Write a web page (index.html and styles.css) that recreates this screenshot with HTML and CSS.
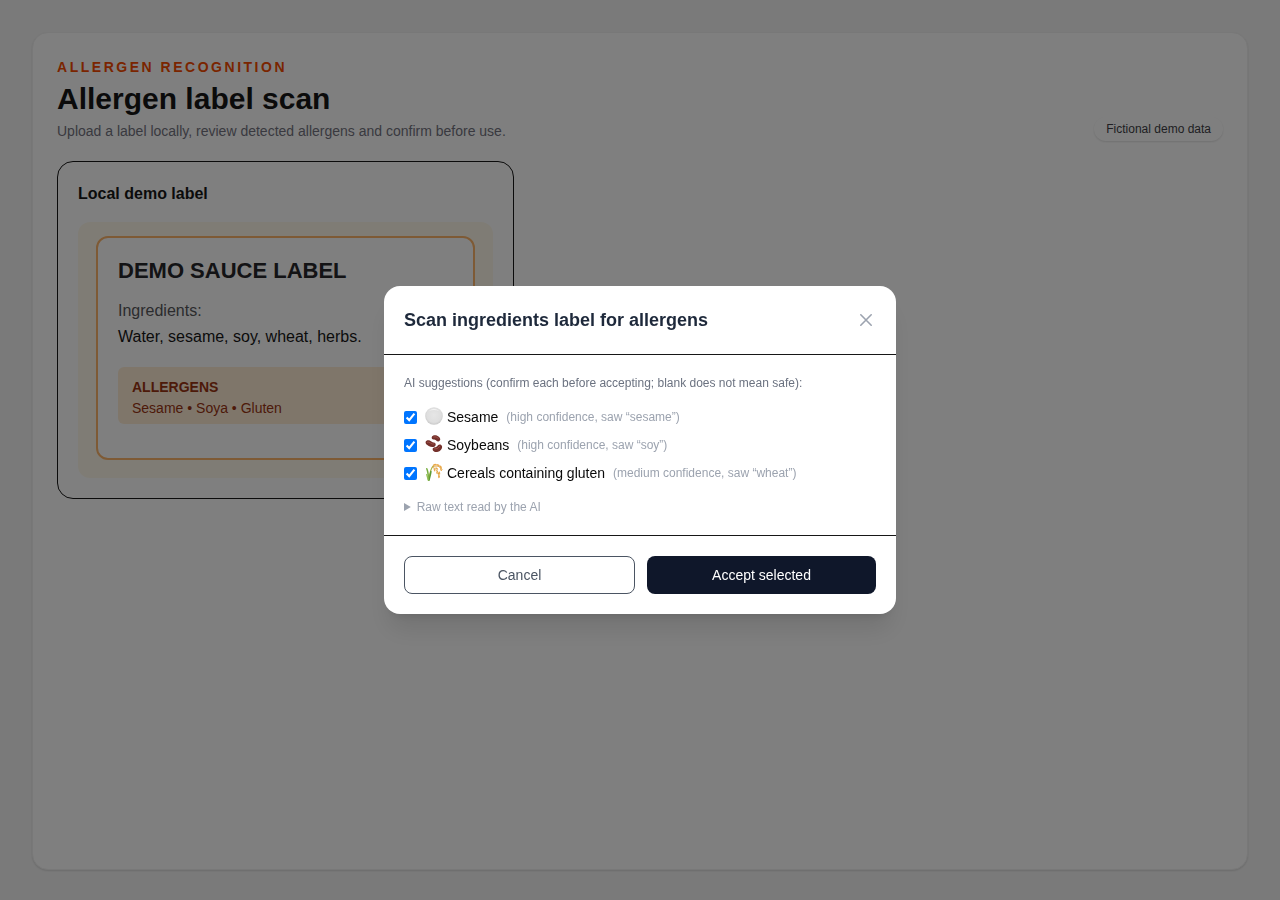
FILE: index.html
```html
<!DOCTYPE html>
<html lang="en">
<head>
<meta charset="UTF-8">
<meta name="viewport" content="width=device-width, initial-scale=1.0">
<title>Allergen label scan</title>
<link rel="stylesheet" href="styles.css">
</head>
<body>

<main class="page">
    <section class="panel">
        <header class="panel-header">
            <div>
                <p class="eyebrow">Allergen recognition</p>
                <h1>Allergen label scan</h1>
                <p class="intro">Upload a label locally, review detected allergens and confirm before use.</p>
            </div>
            <span class="badge">Fictional demo data</span>
        </header>

        <article class="card">
            <h2>Local demo label</h2>
            <div class="label-frame">
                <div class="label">
                    <h3>DEMO SAUCE LABEL</h3>
                    <p class="label-caption">Ingredients:</p>
                    <p class="label-text">Water, sesame, soy, wheat, herbs.</p>
                    <div class="label-allergens">
                        <strong>ALLERGENS</strong>
                        <p>Sesame • Soya • Gluten</p>
                    </div>
                </div>
            </div>
        </article>
    </section>
</main>

<!-- Scan dialog -->
<div class="overlay">
    <div class="modal" role="dialog" aria-modal="true" aria-labelledby="modal-title">
        <div class="modal-header">
            <h2 id="modal-title">Scan ingredients label for allergens</h2>
            <button type="button" class="close" aria-label="Close">
                <svg width="20" height="20" viewBox="0 0 20 20" fill="none" stroke="currentColor" stroke-width="1.6" stroke-linecap="round"><path d="M4.8 4.8l10.4 10.4M15.2 4.8l-10.4 10.4"/></svg>
            </button>
        </div>

        <div class="modal-body">
            <p class="note">AI suggestions (confirm each before accepting; blank does not mean safe):</p>
            <ul class="suggestions">
                <li>
                    <input type="checkbox" id="sesame" checked>
                    <label for="sesame">
                        <svg class="icon" viewBox="0 0 18 18" aria-hidden="true">
                            <defs>
                                <radialGradient id="pearl" cx="50%" cy="45%" r="55%">
                                    <stop offset="0" stop-color="#e6e6e6"/>
                                    <stop offset=".75" stop-color="#dedede"/>
                                    <stop offset="1" stop-color="#c8c8c8"/>
                                </radialGradient>
                            </defs>
                            <circle cx="9" cy="9" r="8.8" fill="url(#pearl)"/>
                            <path d="M3.5 4.2Q9-.8 14.5 4.2Q9 2 3.5 4.2z" fill="#f3f3f3"/>
                        </svg>
                        Sesame
                    </label>
                    <span class="hint">(high confidence, saw “sesame”)</span>
                </li>
                <li>
                    <input type="checkbox" id="soy" checked>
                    <label for="soy">
                        <svg class="icon" viewBox="0 0 18 18" aria-hidden="true">
                            <g fill="#74302b">
                                <path d="M6.8 2.1C7.3.2 10.1-.2 12.2.7C14.6 1.7 16 4 14.8 5.6C13.7 7 12 6.4 11.2 5.4C10.4 4.5 9.6 4.6 8.4 4.4C7.2 4.2 6.5 3.3 6.8 2.1z"/>
                                <path d="M.6 7.1C1 5.3 3.4 4.9 5.1 5.8C6.4 6.5 7.1 7.4 8.6 7.5C10.3 7.6 11.2 9 10.5 10.4C9.5 12.4 6.2 12.3 3.7 11C1.7 10 .2 8.6.6 7.1z"/>
                                <path d="M7.6 14.2C7.5 12.5 9.3 12.3 10.5 12.2C11.9 12.1 12.2 11.1 13.2 10.1C14.4 8.9 16.5 9.4 17 11.2C17.6 13.5 15.6 16 13 16.8C10.3 17.6 7.7 16.3 7.6 14.2z"/>
                            </g>
                            <g fill="none" stroke="#9c5048" stroke-width="1" stroke-linecap="round">
                                <path d="M8.7 1.9Q11.2 1 13.3 3.2"/>
                                <path d="M2.3 7.2Q4 6.5 5.5 8T9 9"/>
                                <path d="M9.6 14Q13 14.5 14.8 11.2"/>
                            </g>
                        </svg>
                        Soybeans
                    </label>
                    <span class="hint">(high confidence, saw “soy”)</span>
                </li>
                <li>
                    <input type="checkbox" id="gluten" checked>
                    <label for="gluten">
                        <svg class="icon" viewBox="0 0 18 18" aria-hidden="true">
                            <g fill="none" stroke-linecap="round">
                                <path d="M3.6 17.2C3.4 12 3 8.5 1.8 5.8" stroke="#76ad3e" stroke-width="1.5"/>
                                <path d="M3.8 17C4.6 10.5 5.4 5.3 8.5 2.8" stroke="#a9b84b" stroke-width="1.2"/>
                                <path d="M4 17C5.2 12.8 5.8 10.5 5.9 8.5" stroke="#5c9b36" stroke-width="1.5"/>
                                <path d="M1.7 11.5L3.2 17" stroke="#91bf56" stroke-width="1.2"/>
                                <path d="M7.5 4C10.5 1.8 14.5 3 17 6.2" stroke="#d99b35" stroke-width="1"/>
                                <path d="M8.5 4.8C11.7 5.8 13.8 9.5 14.3 14" stroke="#d99b35" stroke-width="1"/>
                            </g>
                            <g fill="#eba94a">
                                <ellipse cx="9.5" cy="1.8" rx="1.8" ry=".8" transform="rotate(-22 9.5 1.8)"/>
                                <ellipse cx="12.7" cy="1.9" rx="1.7" ry=".8" transform="rotate(18 12.7 1.9)"/>
                                <ellipse cx="15.5" cy="3.6" rx="1.7" ry=".8" transform="rotate(40 15.5 3.6)"/>
                                <ellipse cx="16" cy="6.6" rx="1.6" ry=".7" transform="rotate(65 16 6.6)"/>
                                <ellipse cx="11.8" cy="5.5" rx="1.7" ry=".8" transform="rotate(40 11.8 5.5)"/>
                                <ellipse cx="9.5" cy="7" rx="1.5" ry=".7" transform="rotate(70 9.5 7)"/>
                                <ellipse cx="12" cy="9.8" rx="1.6" ry=".7" transform="rotate(75 12 9.8)"/>
                                <ellipse cx="14.5" cy="10.2" rx="1.6" ry=".7" transform="rotate(82 14.5 10.2)"/>
                                <ellipse cx="13.8" cy="13.6" rx="1.6" ry=".7" transform="rotate(85 13.8 13.6)"/>
                            </g>
                        </svg>
                        Cereals containing gluten
                    </label>
                    <span class="hint">(medium confidence, saw “wheat”)</span>
                </li>
            </ul>
            <details>
                <summary>Raw text read by the AI</summary>
                <p>Water, sesame, soy, wheat, herbs.</p>
            </details>
        </div>

        <div class="modal-footer">
            <button type="button" class="btn btn-outline">Cancel</button>
            <button type="button" class="btn btn-primary">Accept selected</button>
        </div>
    </div>
</div>

</body>
</html>
```
FILE: styles.css
```css
* {
    box-sizing: border-box;
}

body, h1, h2, h3, p, ul {
    margin: 0;
    padding: 0;
}

body {
    font-family: "Liberation Sans", Arial, sans-serif;
    font-size: 14px;
    line-height: 20px;
    color: #171717;
    background: #f5f5f5;
}

button {
    font: inherit;
    cursor: pointer;
}

.page {
    display: flex;
    min-height: 100vh;
    padding: 32px 32px 30px;
}

.panel {
    flex: 1;
    padding: 24px;
    background: #fff;
    border: 1px solid #f0f0f0;
    border-radius: 16px;
    box-shadow: 0 1px 2px rgba(0,0,0,0.12);
}

.panel-header {
    display: flex;
    justify-content: space-between;
    align-items: flex-end;
    margin-bottom: 20px;
}

.eyebrow {
    font-weight: bold;
    letter-spacing: 0.18em;
    text-transform: uppercase;
    color: #f54a00;
}

h1 {
    margin: 4px 0;
    font-size: 30px;
    line-height: 36px;
}

.intro {
    color: #737380;
}

.badge {
    padding: 4px 12px;
    font-size: 12px;
    line-height: 16px;
    color: #3f3f46;
    background: #fff;
    border-radius: 12px;
    box-shadow: 0 1px 2px rgba(0,0,0,0.12);
}

.card {
    width: 100%;
    max-width: 457px;
    padding: 20px;
    border: 1px solid #171717;
    border-radius: 16px;
}

.card h2 {
    margin-bottom: 16px;
    font-size: 16px;
    line-height: 24px;
}

/* Printed label */
.label-frame {
    padding: 14px 18px 18px;
    background: #fff9eb;
    border-radius: 12px;
}

.label {
    padding: 20px 20px 34px;
    background: #fff;
    border: 2px solid #fdb56a;
    border-radius: 12px;
}

.label h3 {
    margin-bottom: 14px;
    font-size: 22px;
    line-height: 26px;
    color: #27272a;
}

.label-caption,
.label-text {
    font-size: 16px;
    line-height: 26px;
}

.label-caption {
    color: #57575b;
}

.label-allergens {
    margin-top: 17px;
    padding: 10px 14px 5px;
    line-height: 21px;
    color: #9a3412;
    background: #ffedd5;
    border-radius: 6px;
}

/* Dialog */
.overlay {
    position: fixed;
    inset: 0;
    display: flex;
    align-items: center;
    justify-content: center;
    padding: 16px;
    background: rgba(0,0,0,0.5);
}

.modal {
    width: 100%;
    max-width: 512px;
    background: #fff;
    border-radius: 16px;
    box-shadow: 0 20px 25px -5px rgba(0,0,0,0.1), 0 8px 10px -6px rgba(0,0,0,0.1);
}

.modal-header {
    display: flex;
    align-items: center;
    justify-content: space-between;
    padding: 20px;
    border-bottom: 1px solid #171717;
}

.modal-header h2 {
    font-size: 18px;
    line-height: 28px;
    color: #1e293b;
}

.close {
    display: flex;
    padding: 0;
    color: #9ca3af;
    background: none;
    border: none;
}

.modal-body {
    padding: 20px;
    font-size: 12px;
    line-height: 16px;
}

.note {
    margin-bottom: 16px;
    color: #6b7280;
}

.suggestions {
    display: grid;
    gap: 8px;
    margin-bottom: 16px;
    list-style: none;
}

.suggestions li {
    display: flex;
    align-items: center;
    gap: 8px;
}

.suggestions input {
    width: 13px;
    height: 13px;
    margin: 0;
    accent-color: #0075ff;
}

.suggestions label {
    display: flex;
    align-items: center;
    gap: 4px;
    font-size: 14px;
    line-height: 20px;
    color: #0a0a0a;
}

.icon {
    width: 18px;
    height: 18px;
    margin-bottom: 2px;
}

.hint,
details {
    color: #9ca3af;
}

summary {
    cursor: pointer;
}

.modal-footer {
    display: flex;
    gap: 12px;
    padding: 20px;
    border-top: 1px solid #171717;
}

.btn {
    flex: 1;
    padding: 8px 16px;
    border: none;
    border-radius: 8px;
}

.btn-outline {
    color: #4b5563;
    background: #fff;
    border: 1px solid #4b5563;
}

.btn-primary {
    color: #fff;
    background: #0f172a;
}
```
